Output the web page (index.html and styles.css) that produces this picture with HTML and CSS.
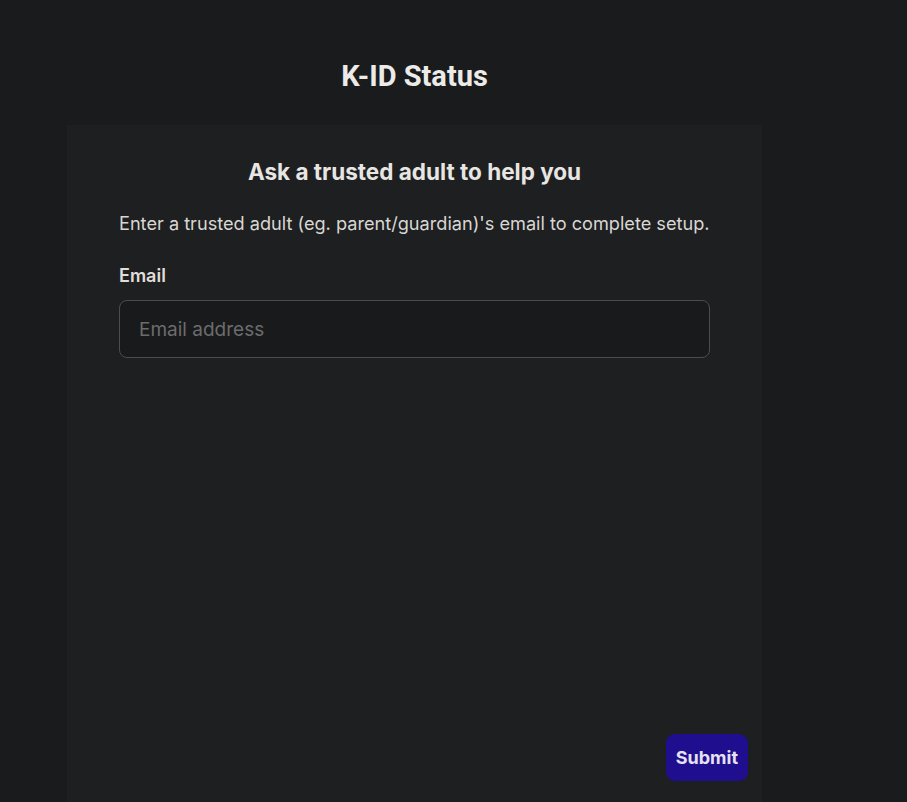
FILE: index.html
```html
<!DOCTYPE html>
<html lang="en">
<head>
<meta charset="utf-8">
<title>K-ID Status</title>
<link rel="stylesheet" href="styles.css">
</head>
<body>
<div class="page">
  <header class="top">
    <h1 class="title">K-ID Status</h1>
  </header>
  <main class="card">
    <div class="content">
      <h2 class="heading">Ask a trusted adult to help you</h2>
      <p class="desc">Enter a trusted adult (eg. parent/guardian)'s email to complete setup.</p>
      <label class="label" for="email">Email</label>
      <input class="input" id="email" type="email" placeholder="Email address">
    </div>
    <div class="footer">
      <button class="submit" type="button">Submit</button>
    </div>
  </main>
</div>
</body>
</html>
```
FILE: styles.css
```css
html, body {
  margin: 0;
  padding: 0;
  height: 100%;
  background: #1a1b1d;
}
body {
  font-family: Inter, "Noto Sans", sans-serif;
  color: #e8e6e3;
}
.page {
  width: 695px;
  margin-left: 67px;
  height: 100%;
  display: flex;
  flex-direction: column;
}
.top {
  height: 125px;
  display: flex;
  justify-content: center;
  align-items: flex-start;
}
.title {
  margin: 58px 0 0;
  font-family: Roboto, "Liberation Sans", sans-serif;
  font-weight: 700;
  font-size: 29px;
  line-height: 36px;
  color: #ecebe8;
}
.card {
  flex: 1;
  background: #1e1f21;
  display: flex;
  flex-direction: column;
}
.content {
  padding: 33px 52px 0;
  display: flex;
  flex-direction: column;
}
.heading {
  margin: 0;
  text-align: center;
  font-size: 22.5px;
  font-weight: 700;
  line-height: 28px;
  color: #e8e6e3;
}
.desc {
  margin: 25px 0 0;
  font-size: 18.15px;
  line-height: 24px;
  color: #d9d7d3;
}
.label {
  margin-top: 29px;
  font-size: 18px;
  font-weight: 600;
  line-height: 24px;
  color: #e0deda;
}
.input {
  margin-top: 12px;
  box-sizing: border-box;
  height: 58px;
  width: 100%;
  padding: 0 19px;
  border: 1px solid #4b4c4e;
  border-radius: 8px;
  background: #191a1c;
  font-family: Inter, "Noto Sans", sans-serif;
  font-size: 19px;
  color: #e8e6e3;
  outline: none;
}
.input::placeholder {
  color: #6c6c6c;
}
.footer {
  margin-top: auto;
  display: flex;
  justify-content: flex-end;
  padding: 0 14px 21px;
}
.submit {
  height: 47px;
  padding: 0 10px;
  min-width: 82px;
  border: none;
  border-radius: 9px;
  background: #1f0f8e;
  color: #e6e2f2;
  font-family: Inter, "Noto Sans", sans-serif;
  font-size: 18px;
  font-weight: 700;
  cursor: pointer;
}
```
